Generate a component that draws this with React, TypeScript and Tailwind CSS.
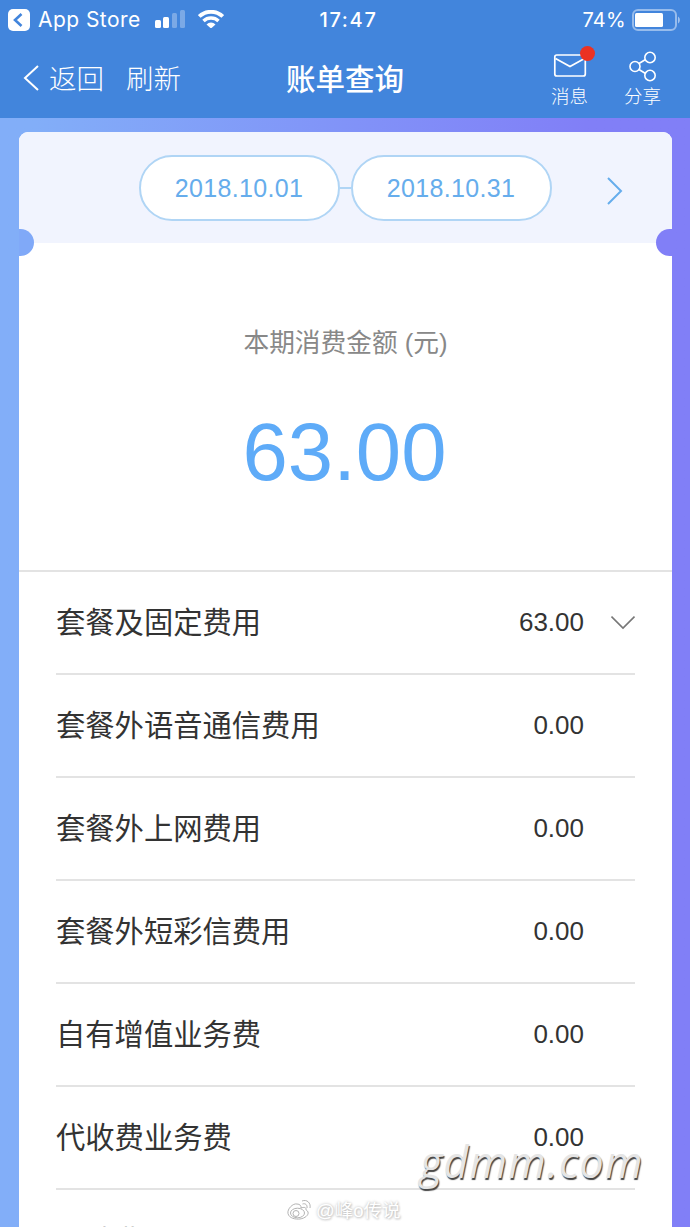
import React from 'react';

interface BillItem {
  name: string;
  amount: string;
  expandable?: boolean;
}

const BILL_ITEMS: BillItem[] = [
  { name: '套餐及固定费用', amount: '63.00', expandable: true },
  { name: '套餐外语音通信费用', amount: '0.00' },
  { name: '套餐外上网费用', amount: '0.00' },
  { name: '套餐外短彩信费用', amount: '0.00' },
  { name: '自有增值业务费', amount: '0.00' },
  { name: '代收费业务费', amount: '0.00' },
  { name: '其他费用', amount: '0.00' },
];

const StatusBar: React.FC = () => (
  <div className="grid h-10 grid-cols-3 items-center pr-2.5 pl-2 font-['Inter','Liberation_Sans',sans-serif] text-[20px]">
    <div className="flex items-center">
      <svg width="22" height="22" viewBox="0 0 22 22" className="shrink-0">
        <rect width="22" height="22" rx="5" fill="#fff" />
        <path d="M13.5 5L7 11l6.5 6" fill="none" stroke="#4285dc" strokeWidth="2.6" />
      </svg>
      <span className="ml-2 text-[21px] tracking-[0.45px] whitespace-nowrap">App Store</span>
      <svg width="31" height="18" viewBox="0 0 31 18" className="-mt-0.5 ml-3.5 shrink-0" fill="#fff">
        <rect y="10" width="6" height="8" rx="1.5" />
        <rect x="8" y="7" width="6" height="11" rx="1.5" />
        <rect x="17" y="3" width="5" height="15" rx="1.5" opacity="0.3" />
        <rect x="25" width="5" height="18" rx="1.5" opacity="0.3" />
      </svg>
      <svg width="26" height="18" viewBox="0 0 26 18" className="-mt-0.5 ml-3 shrink-0" fill="none" stroke="#fff">
        <path d="M1.2 6.5a17 17 0 0 1 23.6 0" strokeWidth="3.8" />
        <path d="M5.5 11a11 11 0 0 1 15 0" strokeWidth="3.5" />
        <path d="M8.5 14.5a6.2 6.2 0 0 1 9 0L13 18.5z" fill="#fff" stroke="none" />
      </svg>
    </div>
    <div className="pl-[9px] text-center font-medium tracking-[1.7px]">17:47</div>
    <div className="flex items-center justify-end">
      <span className="tracking-[0.3px]">74%</span>
      <svg width="48" height="22" viewBox="0 0 48 22" className="ml-1.5">
        <rect x="1" y="1" width="43" height="20" rx="5" fill="none" stroke="#fff" strokeOpacity="0.45" strokeWidth="2" />
        <rect x="3" y="4" width="28" height="14" rx="1.5" fill="#fff" />
        <path d="M46 7.5c2.5 1.5 2.5 5.5 0 7z" fill="#fff" fillOpacity="0.5" />
      </svg>
    </div>
  </div>
);

const NavBar: React.FC = () => (
  <div className="grid h-[78px] grid-cols-3 items-center">
    <div className="flex items-center pl-[23px] text-[27.5px] font-light">
      <svg width="16" height="26" viewBox="0 0 16 26" className="-mt-0.5" fill="none" stroke="#fff" strokeWidth="2">
        <path d="M15 1L2 13l13 12" />
      </svg>
      <span className="mt-0.5 ml-2.5">返回</span>
      <span className="mt-0.5 ml-[22px]">刷新</span>
    </div>
    <h1 className="mt-0.5 text-center text-[29.5px] font-medium">账单查询</h1>
    <div className="flex justify-end gap-9 pr-[29px] text-[18.5px] leading-6 font-light">
      <div className="relative flex flex-col items-center">
        <svg width="34" height="34" viewBox="0 0 34 34" className="-mt-px mb-0.5 ml-0.5" fill="none" stroke="#fff" strokeWidth="1.7">
          <rect x="1.8" y="6" width="30.5" height="21" rx="2" />
          <path d="M2.5 9.5L17 17.5l14.5-8" />
        </svg>
        <span className="absolute -top-1 -right-[7px] size-[15px] rounded-full bg-[#eb3223]" />
        <span>消息</span>
      </div>
      <div className="flex flex-col items-center">
        <svg width="34" height="34" viewBox="0 0 34 34" className="-mt-px mb-0.5 ml-0.5" fill="none" stroke="#fff" strokeWidth="1.6">
          <circle cx="9" cy="17.5" r="5" />
          <circle cx="24" cy="8.5" r="5.2" />
          <circle cx="24" cy="26.5" r="5.2" />
          <path d="M13 14.5l6.5-4M13 20.5l6.5 4" />
        </svg>
        <span>分享</span>
      </div>
    </div>
  </div>
);

const DatePill: React.FC<{ date: string }> = ({ date }) => (
  <div className="flex h-[66px] w-[201px] items-center justify-center rounded-full border-2 border-[#b0d5f5] bg-white pt-0.5 pr-px text-[25px] tracking-[0.35px] text-[#66adec]">
    {date}
  </div>
);

const PeriodPicker: React.FC = () => (
  <div className="relative flex h-[111px] items-center bg-[#f1f4fe] pl-[120px]">
    <DatePill date="2018.10.01" />
    <div className="h-0.5 w-[11px] bg-[#b0d5f5]" />
    <DatePill date="2018.10.31" />
    <svg width="16" height="28" viewBox="0 0 16 28" className="mt-[7px] ml-[55px]" fill="none" stroke="#66adec" strokeWidth="2">
      <path d="M1 1l13 13L1 27" />
    </svg>
    {/* ticket notches */}
    <span className="absolute bottom-[-13px] left-0 h-[27px] w-[15px] rounded-r-full bg-[#80a9f8]" />
    <span className="absolute right-0 bottom-[-13px] h-[27px] w-4 rounded-l-full bg-[#817ff7]" />
  </div>
);

const BillRow: React.FC<{ item: BillItem }> = ({ item }) => (
  <li className="flex h-[103px] items-center border-b-2 border-[#e3e3e3] text-[#333]">
    <span className="flex-1 text-[29.3px]">{item.name}</span>
    <span className="text-[26px]">{item.amount}</span>
    <span className="flex w-[51px] justify-end">
      {item.expandable && (
        <svg width="24" height="15" viewBox="0 0 24 15" fill="none" stroke="#777" strokeWidth="1.6">
          <path d="M.5 1.5L12 13 23.5 1.5" />
        </svg>
      )}
    </span>
  </li>
);

const Watermarks: React.FC = () => (
  <>
    <div className="absolute top-[1137px] left-[420px] font-['Open_Sans','Noto_Sans',sans-serif] text-[43px] leading-[50px] font-medium tracking-[1.2px] text-[#e5e5e5] italic [text-shadow:1px_1.5px_1px_#444]">
      gdmm.com
    </div>
    <div className="absolute top-[1199px] left-[287px] flex items-center text-[18.5px] leading-6 text-white [text-shadow:0_0_3px_#bbb,1px_1px_2px_#ccc]">
      <svg width="25" height="22" viewBox="0 0 25 22" className="-mt-0.5" fill="none" stroke="#aaa" strokeWidth="0.9">
        <path d="M10 5C6 4 0 10 1 14.5c1 5 8 6 12 5.5 5-.7 9-4 8-7-.4-1.5-2-1.7-2-2 .5-3-2-3-5-2 .4-2-1-4-4-4z" />
        <ellipse cx="10.5" cy="14" rx="7" ry="4.8" />
        <circle cx="9" cy="14.5" r="3" />
        <path d="M15 2c5-2 9 2 8 7M15.5 5c3-1 5 1 4.5 4" />
      </svg>
      <span className="ml-1">@峰o传说</span>
    </div>
  </>
);

const App: React.FC = () => {
  return (
    <div className="relative flex h-[1227px] w-[690px] flex-col overflow-hidden bg-linear-to-r from-[#82aef8] from-5% via-[#8193f8] via-50% to-[#817ff7] to-85% font-['Liberation_Sans','Noto_Sans_CJK_SC',sans-serif]">
      <header className="h-[118px] shrink-0 bg-[#4285dc] text-white">
        <StatusBar />
        <NavBar />
      </header>

      <main className="mt-3.5 mr-[18px] ml-[19px] flex-1 overflow-hidden rounded-t-[9px] bg-white">
        <PeriodPicker />
        <section className="flex h-[329px] flex-col items-center border-b-2 border-[#e3e3e3] pt-20 text-center">
          <p className="text-[25.7px] leading-10 text-[#888]">本期消费金额 (元)</p>
          <p className="mt-[39px] pr-0.5 text-[81.5px] leading-[100px] text-[#5eabf8]">63.00</p>
        </section>
        <ul className="mr-[37px] ml-[37px] [&>li:last-child]:pt-0.5">
          {BILL_ITEMS.map((item) => (
            <BillRow key={item.name} item={item} />
          ))}
        </ul>
      </main>

      <Watermarks />
    </div>
  );
};

export default App;
